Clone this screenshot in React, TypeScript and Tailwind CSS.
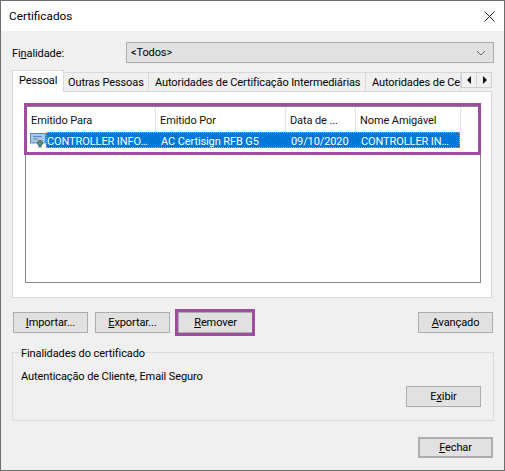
const font = { fontFamily: 'Roboto, sans-serif' };

function Btn({ pre = "", u, post, className = "" }: { pre?: string; u: string; post: string; className?: string }) {
  return (
    <button className={`w-[75px] h-[21px] pt-[1px] bg-[#e1e1e1] border border-[#adadad] text-[11px] tracking-[-0.1px] leading-[18px] text-[#000] flex items-center justify-center shrink-0 ${className}`}>
      <span>{pre}<span className="underline">{u}</span>{post}</span>
    </button>
  );
}

function Tab({ label, className }: { label: string; className: string }) {
  return (
    <div className={`h-[19px] mt-[2px] pt-[1px] bg-[#f0f0f0] border border-l-0 border-b-0 border-[#d9d9d9] text-[11px] tracking-[-0.1px] leading-[18px] text-[#000] whitespace-nowrap overflow-hidden shrink-0 ${className}`}>
      {label}
    </div>
  );
}

function Head({ label, width }: { label: string; width: string }) {
  return (
    <div className={`${width} h-[25px] border-r border-[#e5e5e5] pl-[4px] pt-[5px] text-[11px] tracking-[-0.1px] leading-[18px] text-[#111] shrink-0 whitespace-nowrap`}>{label}</div>
  );
}

export default function App() {
  return (
    <div style={font} className="relative w-[505px] h-[471px] bg-[#f0f0f0] border border-[#6e6e6e] overflow-hidden">
      <div className="h-[30px] bg-white flex items-center justify-between pl-[8px] pr-[7px]">
        <span className="pt-[1px] text-[11.75px] text-[#000]">Certificados</span>
        <svg width="13" height="13" viewBox="0 0 13 13" className="mr-[1px]">
          <path d="M1.5 1.5 L11.5 11.5 M11.5 1.5 L1.5 11.5" stroke="#222" strokeWidth="1" fill="none" />
        </svg>
      </div>

      <div className="flex items-center h-[21px] mt-[11px] pl-[11px] pr-[10px] text-[11px] tracking-[-0.1px] text-[#000]">
        <span className="w-[114px] pt-[3px]">Fi<span className="underline">n</span>alidade:</span>
        <div className="flex-1 h-[21px] bg-[#e1e1e1] border border-[#adadad] flex items-center justify-between pl-[4px] pr-[7px]">
          <span className="pt-[2px]">&lt;Todos&gt;</span>
          <svg width="10" height="6" viewBox="0 0 10 6"><path d="M1 1 L5 5 L9 1" stroke="#666" fill="none" /></svg>
        </div>
      </div>

      <div className="relative flex h-[21px] mt-[7px] ml-[11px] z-10">
        <div className="w-[52px] h-[22px] pt-[1px] bg-white border border-b-0 border-[#d9d9d9] pl-[6px] text-[11px] tracking-[-0.1px] leading-[18px] text-[#000] shrink-0">Pessoal</div>
        <Tab label="Outras Pessoas" className="w-[85px] pl-[4px]" />
        <Tab label="Autoridades de Certificação Intermediárias" className="w-[217px] pl-[6px]" />
        <Tab label="Autoridades de Certificação Raiz" className="w-[95px] pl-[6px]" />
        <div className="flex mt-[2px] h-[16px]">
          <div className="w-[16px] h-[16px] bg-[#f0f0f0] border border-[#d0d0d0] flex items-center justify-center">
            <svg width="5" height="8" viewBox="0 0 5 8"><path d="M4 0 L0 4 L4 8 Z" fill="#111" /></svg>
          </div>
          <div className="w-[15px] h-[16px] bg-[#f0f0f0] border border-l-0 border-[#d0d0d0] flex items-center justify-center">
            <svg width="5" height="8" viewBox="0 0 5 8"><path d="M1 0 L5 4 L1 8 Z" fill="#111" /></svg>
          </div>
        </div>
      </div>

      <div className="w-[480px] h-[207px] ml-[11px] bg-white border border-[#d9d9d9] pt-[14px] pl-[12px]">
        <div className="w-[456px] h-[177px] border border-[#828790] pl-[1px]">
          <div className="flex">
            <Head label="Emitido Para" width="w-[129px]" />
            <Head label="Emitido Por" width="w-[130px]" />
            <Head label="Data de ..." width="w-[70px]" />
            <Head label="Nome Amigável" width="w-[105px]" />
          </div>
          <div className="flex h-[16px]">
            <div className="w-[19px] shrink-0 flex items-center pl-[3px]">
              <svg width="16" height="16" viewBox="0 0 16 16" className="shrink-0">
                <rect x="0.5" y="1.5" width="15" height="9.5" fill="#a8c6e6" stroke="#5a8db8" />
                <path d="M3 4.5 H12 M3 7 H8" stroke="#5a8db8" />
                <path d="M8.5 12 V16 L10 15 L11.5 16 V12 Z" fill="#2f7ab8" />
                <circle cx="10" cy="11" r="2.5" fill="#5d8f7a" stroke="#4a6f66" />
              </svg>
            </div>
            <div className="w-[414px] bg-[#0078d7] text-white text-[11px] tracking-[-0.1px] leading-[19px] flex whitespace-nowrap outline-1 outline-dotted outline-[#e8a050] -outline-offset-1">
              <span className="w-[115px] pl-[1px] shrink-0">CONTROLLER INFO…</span>
              <span className="w-[130px] shrink-0">AC Certisign RFB G5</span>
              <span className="w-[70px] shrink-0">09/10/2020</span>
              <span>CONTROLLER IN…</span>
            </div>
          </div>
        </div>
      </div>

      <div className="flex mt-[14px] pl-[12px] pr-[11px]">
        <Btn u="I" post="mportar..." />
        <Btn u="E" post="xportar..." className="ml-[7px]" />
        <Btn u="R" post="emover" className="ml-[8px]" />
        <Btn u="A" post="vançado" className="ml-auto" />
      </div>

      <div className="relative mt-[19px] ml-[11px] w-[482px] h-[69px] border border-[#dcdcdc] pl-[8px] pt-[15px] text-[11px] tracking-[-0.1px] leading-[18px] text-[#000]">
        <span className="absolute -top-[8px] left-[8px] bg-[#f0f0f0]">Finalidades do certificado</span>
        <div>Autenticação de Cliente, Email Seguro</div>
        <div className="flex justify-end pr-[12px]">
          <Btn pre="E" u="x" post="ibir" />
        </div>
      </div>

      <div className="flex justify-end mt-[16px] pr-[11px]">
        <Btn u="F" post="echar" className="border-2 border-[#0078d7]" />
      </div>

      <div className="absolute left-[23px] top-[102px] w-[457px] h-[52px] border-[3px] border-[#a04ca0] pointer-events-none" />
      <div className="absolute left-[174px] top-[308px] w-[80px] h-[27px] border-[3px] border-[#a04ca0] pointer-events-none" />
    </div>
  );
}
